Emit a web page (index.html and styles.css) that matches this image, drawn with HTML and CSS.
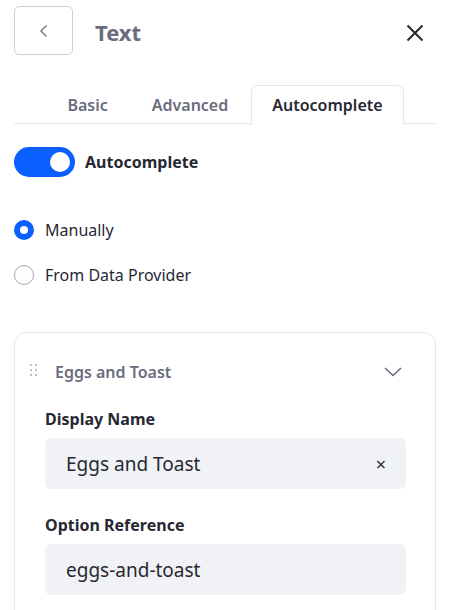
FILE: index.html
```html
<!DOCTYPE html>
<html>
<head>
<meta charset="utf-8">
<link rel="stylesheet" href="styles.css">
</head>
<body>
<div class="panel">
  <header class="header">
    <button class="back-btn" aria-label="Back">
      <svg width="16" height="16" viewBox="0 0 16 16"><path d="M10.5 2.5 L5 8 L10.5 13.5" fill="none" stroke="#6b6c7e" stroke-width="1.3"/></svg>
    </button>
    <h1 class="title">Text</h1>
    <button class="close-btn" aria-label="Close">
      <svg width="20" height="20" viewBox="0 0 20 20"><path d="M2.5 2.5 L17.5 17.5 M17.5 2.5 L2.5 17.5" fill="none" stroke="#272833" stroke-width="2"/></svg>
    </button>
  </header>

  <nav class="tabs">
    <span class="tab">Basic</span>
    <span class="tab">Advanced</span>
    <span class="tab active">Autocomplete</span>
  </nav>

  <div class="toggle-row">
    <span class="toggle"><span class="knob"></span></span>
    <span class="toggle-label">Autocomplete</span>
  </div>

  <div class="radios">
    <label class="radio-row"><span class="radio checked"></span><span>Manually</span></label>
    <label class="radio-row"><span class="radio"></span><span>From Data Provider</span></label>
  </div>

  <section class="card">
    <div class="card-head">
      <span class="drag">
        <i></i><i></i><i></i><i></i><i></i><i></i>
      </span>
      <span class="card-title">Eggs and Toast</span>
      <svg class="chev" width="18" height="10" viewBox="0 0 18 10"><path d="M1 1 L9 8.5 L17 1" fill="none" stroke="#6b6c7e" stroke-width="1.6"/></svg>
    </div>
    <div class="field">
      <div class="field-label">Display Name</div>
      <div class="input"><span>Eggs and Toast</span><span class="clear">×</span></div>
    </div>
    <div class="field">
      <div class="field-label">Option Reference</div>
      <div class="input"><span>eggs-and-toast</span></div>
    </div>
  </section>
</div>
</body>
</html>
```
FILE: styles.css
```css
* { box-sizing: border-box; }
html, body { margin: 0; background: #fff; }
body {
  font-family: "Noto Sans", "Open Sans", sans-serif;
  color: #272833;
  overflow: hidden;
}
.panel {
  padding: 0 14px;
  height: 610px;
  overflow: hidden;
}

.header {
  display: flex;
  align-items: flex-start;
  padding-top: 6px;
  height: 61px;
}
.back-btn {
  width: 59px;
  height: 49px;
  border: 1px solid #cdced9;
  border-radius: 5px;
  background: #fff;
  display: flex;
  align-items: center;
  justify-content: center;
  padding: 0;
}
.title {
  margin: 0 0 0 22px;
  font-size: 22px;
  font-weight: 700;
  color: #6b6c7e;
  line-height: 52px;
}
.close-btn {
  margin-left: auto;
  margin-right: 11px;
  margin-top: 17px;
  background: none;
  border: 0;
  padding: 0;
  display: flex;
}

.tabs {
  margin-top: 24px;
  display: flex;
  justify-content: center;
  gap: 2px;
  border-bottom: 1px solid #e7e7ed;
  height: 39px;
}
.tab {
  padding: 0 20px;
  height: 39px;
  line-height: 38px;
  font-size: 16px;
  font-weight: 600;
  color: #6b6c7e;
  border: 1px solid transparent;
  border-bottom: 0;
  border-radius: 6px 6px 0 0;
}
.tab.active {
  color: #272833;
  border-color: #e7e7ed;
  background: #fff;
  height: 40px;
}

.toggle-row {
  display: flex;
  align-items: center;
  gap: 10px;
  margin-top: 23px;
}
.toggle {
  width: 61px;
  height: 30px;
  border-radius: 15px;
  background: #0b5fff;
  position: relative;
  display: block;
}
.knob {
  position: absolute;
  right: 5px;
  top: 5px;
  width: 20px;
  height: 20px;
  border-radius: 50%;
  background: #fff;
}
.toggle-label {
  font-size: 16px;
  font-weight: 700;
}

.radios {
  margin-top: 43px;
  display: flex;
  flex-direction: column;
  gap: 25px;
}
.radio-row {
  display: flex;
  align-items: center;
  gap: 11px;
  font-size: 16px;
  height: 20px;
}
.radio {
  width: 20px;
  height: 20px;
  border-radius: 50%;
  border: 1px solid #a7a9bc;
  background: #fff;
  flex: none;
}
.radio.checked {
  border: 6px solid #0b5fff;
}

.card {
  margin-top: 47px;
  border: 1px solid #e7e7ed;
  border-radius: 12px;
  padding: 0 29px 40px 30px;
  height: 320px;
}
.card-head {
  display: flex;
  align-items: center;
  height: 50px;
  margin-top: 14px;
  position: relative;
}
.drag {
  position: absolute;
  left: -15px;
  top: 17px;
  display: grid;
  grid-template-columns: 2px 2px;
  gap: 3px;
}
.drag i {
  width: 2px;
  height: 2px;
  background: #a7a9bc;
  border-radius: 1px;
}
.card-title {
  margin-left: 10px;
  font-size: 16px;
  font-weight: 600;
  color: #6b6c7e;
}
.chev { margin-left: auto; margin-right: 4px; }

.field { margin-top: 11px; }
.field + .field { margin-top: 25px; }
.field-label {
  font-size: 16px;
  font-weight: 700;
  margin-bottom: 8px;
}
.input {
  height: 51px;
  background: #f1f2f5;
  border-radius: 6px;
  display: flex;
  align-items: center;
  padding: 0 20px 0 21px;
  font-size: 19px;
  color: #272833;
}
.clear {
  margin-left: auto;
  font-size: 18px;
}
```
